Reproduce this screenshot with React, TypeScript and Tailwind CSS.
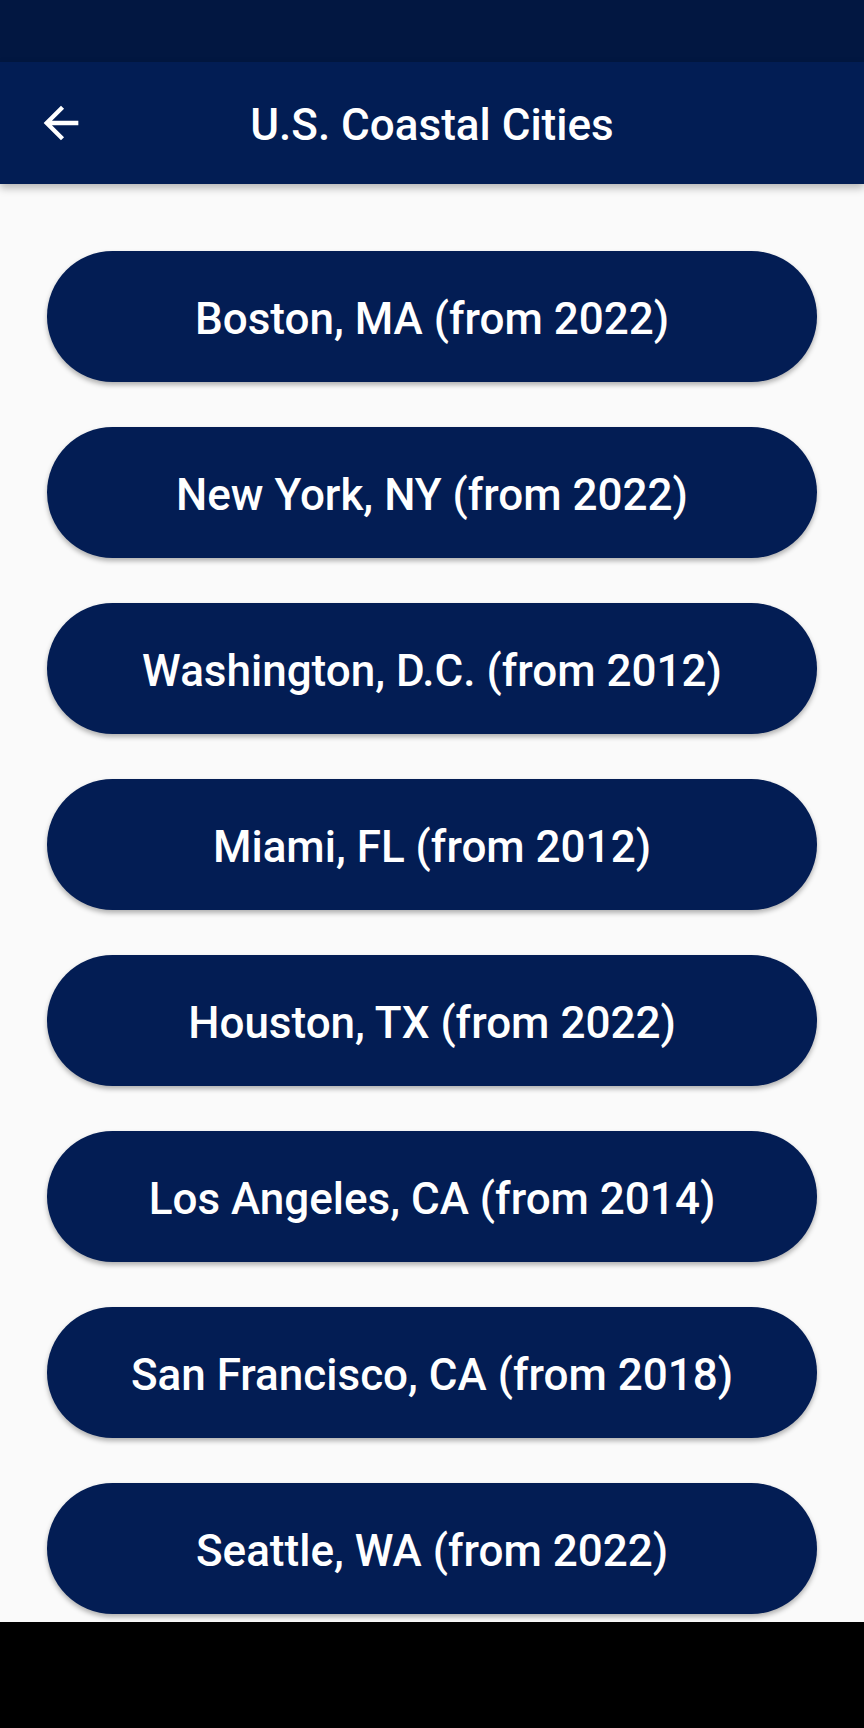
import React from "react";

const cities = [
  "Boston, MA (from 2022)",
  "New York, NY (from 2022)",
  "Washington, D.C. (from 2012)",
  "Miami, FL (from 2012)",
  "Houston, TX (from 2022)",
  "Los Angeles, CA (from 2014)",
  "San Francisco, CA (from 2018)",
  "Seattle, WA (from 2022)",
];

export default function App() {
  return (
    <div
      className="w-[864px] h-[1728px] flex flex-col bg-[#fafafa] overflow-hidden"
      style={{ fontFamily: "Roboto, 'Noto Sans', sans-serif" }}
    >
      <div className="h-[62px] bg-[#021741] shrink-0" />
      <div className="relative z-10 h-[122px] shrink-0 bg-[#021d54] flex items-center justify-center shadow-[0_4px_8px_rgba(0,0,0,0.28)]">
        <button className="absolute left-[35px] top-[35px] w-[52px] h-[52px] flex items-center justify-center">
          <svg viewBox="0 0 24 24" width="52" height="52" fill="white">
            <path d="M20 11H7.83l5.59-5.59L12 4l-8 8 8 8 1.41-1.41L7.83 13H20v-2z" />
          </svg>
        </button>
        <h1 className="text-white text-[44px] font-medium leading-none pt-[4px]">U.S. Coastal Cities</h1>
      </div>
      <div className="flex-1 flex flex-col gap-[45px] pt-[67px] pl-[47px] pr-[47px] overflow-hidden">
        {cities.map((c) => (
          <button
            key={c}
            className="h-[131px] w-full shrink-0 rounded-full bg-[#031d54] text-white text-[44px] font-medium leading-none pt-[4px] flex items-center justify-center shadow-[0_3px_5px_rgba(0,0,0,0.3)]"
          >
            {c}
          </button>
        ))}
      </div>
      <div className="h-[106px] bg-black shrink-0" />
    </div>
  );
}
